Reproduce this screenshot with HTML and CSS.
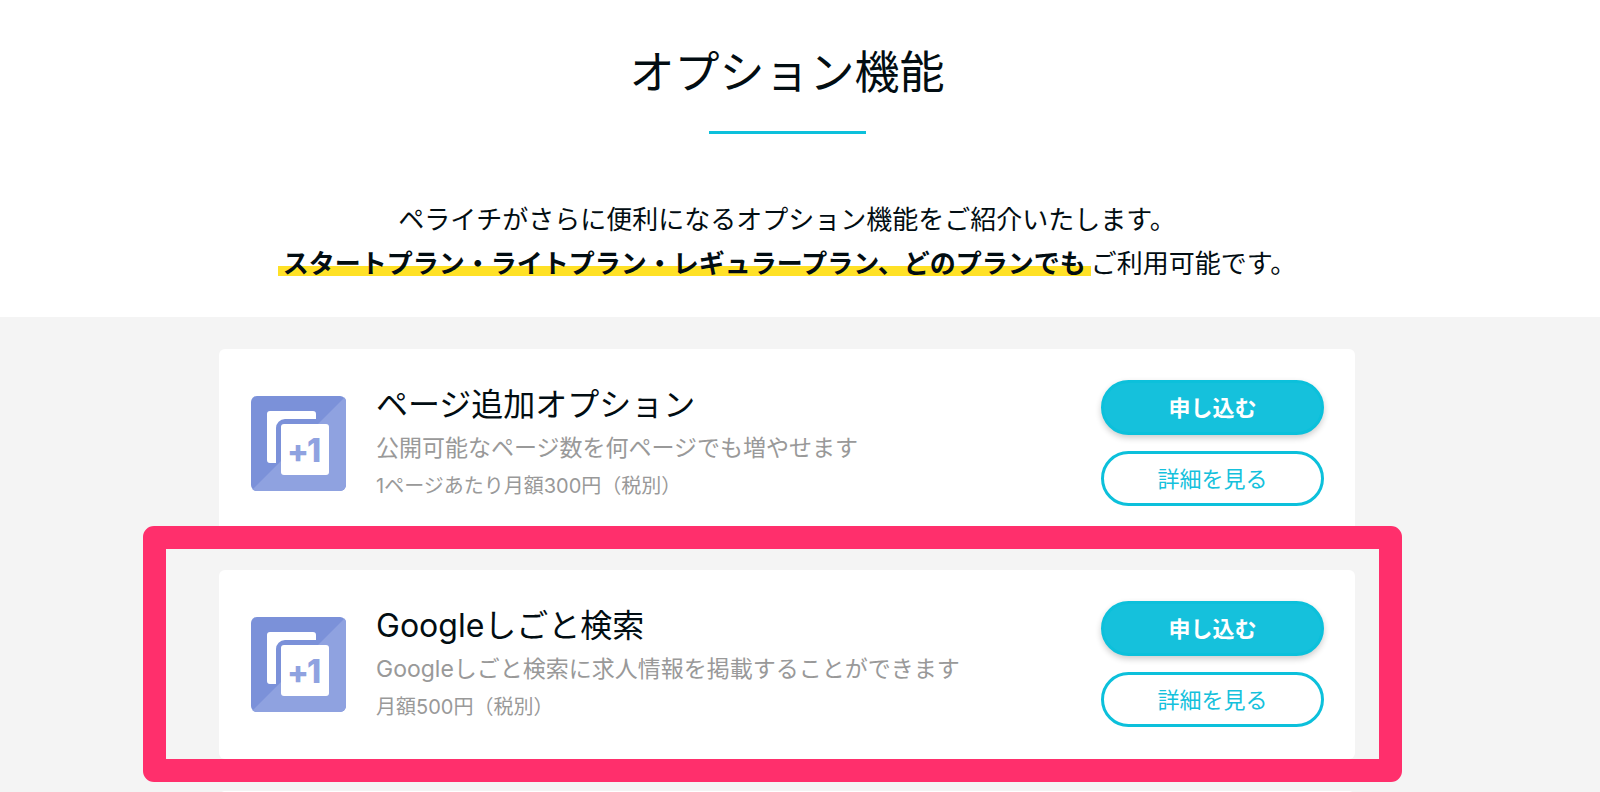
FILE: index.html
```html
<!DOCTYPE html>
<html lang="ja">
<head>
<meta charset="UTF-8">
<meta name="viewport" content="width=device-width, initial-scale=1.0">
<title>オプション機能</title>
<link rel="stylesheet" href="styles.css">
</head>
<body>
    <header class="intro">
        <h1>オプション機能</h1>
        <p class="lead">
            ペライチがさらに便利になるオプション機能をご紹介いたします。<br>
            <strong class="marker">スタートプラン・ライトプラン・レギュラープラン、どのプランでも</strong>ご利用可能です。
        </p>
    </header>

    <main class="options">
        <section class="card">
            <svg class="card-icon" viewBox="0 0 95 95" aria-hidden="true">
                <rect width="95" height="95" rx="6" fill="#7b91d9"/>
                <path d="M93.5 1.5A6 6 0 0 1 95 6V89a6 6 0 0 1-6 6H6a6 6 0 0 1-4.5-1.5z" fill="#8fa2e0"/>
                <path d="M19 15H62a3 3 0 0 1 3 3v5H34a9 9 0 0 0-9 9V67H19a3 3 0 0 1-3-3V18a3 3 0 0 1 3-3z" fill="#fff"/>
                <rect x="30" y="28" width="48" height="51" rx="3" fill="#fff"/>
                <text class="icon-text" x="36" y="67">+</text>
                <text class="icon-text" x="56" y="66">1</text>
            </svg>
            <div class="card-body">
                <h2>ページ追加オプション</h2>
                <p class="desc">公開可能なページ数を何ページでも増やせます</p>
                <p class="price">1ページあたり月額300円（税別）</p>
            </div>
            <div class="card-buttons">
                <button type="button" class="btn btn-apply">申し込む</button>
                <button type="button" class="btn btn-detail">詳細を見る</button>
            </div>
        </section>

        <section class="card marked">
            <svg class="card-icon" viewBox="0 0 95 95" aria-hidden="true">
                <rect width="95" height="95" rx="6" fill="#7b91d9"/>
                <path d="M93.5 1.5A6 6 0 0 1 95 6V89a6 6 0 0 1-6 6H6a6 6 0 0 1-4.5-1.5z" fill="#8fa2e0"/>
                <path d="M19 15H62a3 3 0 0 1 3 3v5H34a9 9 0 0 0-9 9V67H19a3 3 0 0 1-3-3V18a3 3 0 0 1 3-3z" fill="#fff"/>
                <rect x="30" y="28" width="48" height="51" rx="3" fill="#fff"/>
                <text class="icon-text" x="36" y="67">+</text>
                <text class="icon-text" x="56" y="66">1</text>
            </svg>
            <div class="card-body">
                <h2>Googleしごと検索</h2>
                <p class="desc">Googleしごと検索に求人情報を掲載することができます</p>
                <p class="price">月額500円（税別）</p>
            </div>
            <div class="card-buttons">
                <button type="button" class="btn btn-apply">申し込む</button>
                <button type="button" class="btn btn-detail">詳細を見る</button>
            </div>
        </section>

        <section class="card"></section>
    </main>
</body>
</html>
```
FILE: styles.css
```css
* {
    box-sizing: border-box;
}
html {
    height: 100%;
    overflow: hidden;
}
body {
    display: flex;
    flex-direction: column;
    height: 100%;
    margin: 0;
    overflow: hidden;
    background: #fff;
    color: #020d12;
    font-family: Inter, "Noto Sans CJK JP", sans-serif;
}
h1, h2, p {
    margin: 0;
    font-weight: 400;
}

/* 見出し */
.intro {
    flex: none;
    padding: 43px 26px 31px 0;
    text-align: center;
}
h1 {
    font-size: 45px;
    line-height: 60px;
}
h1::after {
    content: "";
    display: block;
    width: 157px;
    height: 3px;
    margin: 28px auto 0;
    background: #0cc0db;
}
.lead {
    margin-top: 64px;
    font-size: 26px;
    line-height: 44px;
}
.marker {
    padding: 0 5px;
    font-weight: 700;
    background: linear-gradient(transparent 18px, #ffe126 18px, #ffe126 28px, transparent 28px);
}

/* オプション一覧 */
.options {
    flex: 1 0 auto;
    display: flex;
    flex-direction: column;
    align-items: center;
    gap: 32px;
    padding: 32px 26px 32px 0;
    background: #f4f4f4;
}
.card {
    position: relative;
    display: flex;
    align-items: center;
    gap: 30px;
    width: 100%;
    max-width: 1136px;
    min-height: 189px;
    padding: 31px 31px 32px 32px;
    background: #fff;
    border-radius: 6px;
}
/* 注目させたいカードを囲む枠 */
.marked::after {
    content: "";
    position: absolute;
    top: -44px;
    right: -47px;
    bottom: -23px;
    left: -76px;
    border: 23px solid #ff2f6c;
    border-radius: 11px;
    pointer-events: none;
}
.card-icon {
    flex: none;
    width: 95px;
    height: 95px;
}
.icon-text {
    fill: #8fa2e0;
    font-family: Inter, sans-serif;
    font-size: 32px;
    font-weight: 800;
}
.card-body {
    flex: 1;
}
h2 {
    font-size: 32px;
    line-height: 46px;
}
.desc,
.price {
    color: #999;
}
.desc {
    font-size: 23px;
    line-height: 40px;
}
.price {
    font-size: 20px;
    line-height: 36px;
}
.card-buttons {
    display: flex;
    flex-direction: column;
    gap: 16px;
    width: 223px;
}
.btn {
    height: 55px;
    padding: 0 0 3px;
    border: 3px solid #0cc0db;
    border-radius: 28px;
    font-family: inherit;
    font-size: 22px;
    cursor: pointer;
}
.btn-apply {
    background: #15c1dc;
    color: #fff;
    font-weight: 700;
    box-shadow: 0 3px 6px rgba(0, 0, 0, 0.2);
}
.btn-detail {
    background: #fff;
    color: #15c1dc;
}
```
